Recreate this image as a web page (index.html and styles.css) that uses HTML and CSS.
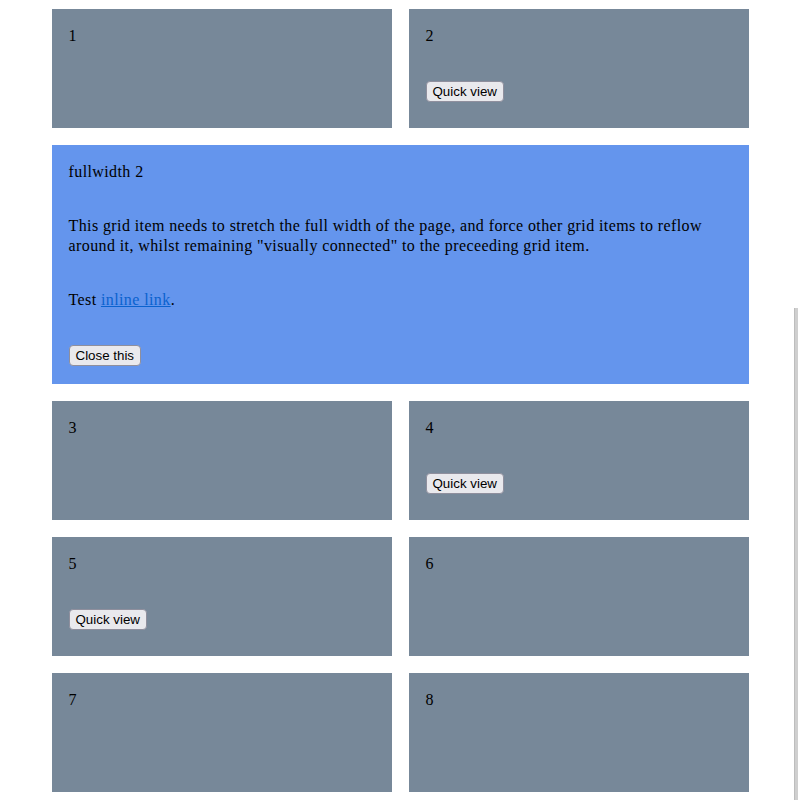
FILE: index.html
```html
<!DOCTYPE html>
<html lang="en">
<head>
    <meta charset="UTF-8">
    <title>Grid fullwidth item</title>
    <link rel="stylesheet" href="styles.css">
</head>
<body>
<div class="grid">
    <div class="grid-item">
        <p>1</p>
    </div>
    <div class="grid-item">
        <p>2</p>
        <button class="btn">Quick view</button>
    </div>

    <!-- expanded item, spans both columns -->
    <div class="grid-item fullwidth">
        <p>fullwidth 2</p>
        <p>This grid item needs to stretch the full width of the page, and force other grid items to reflow around it, whilst remaining "visually connected" to the preceeding grid item.</p>
        <p>Test <a href="#">inline link</a>.</p>
        <button class="btn">Close this</button>
    </div>

    <div class="grid-item">
        <p>3</p>
    </div>
    <div class="grid-item">
        <p>4</p>
        <button class="btn">Quick view</button>
    </div>
    <div class="grid-item">
        <p>5</p>
        <button class="btn">Quick view</button>
    </div>
    <div class="grid-item">
        <p>6</p>
    </div>
    <div class="grid-item">
        <p>7</p>
    </div>
    <div class="grid-item">
        <p>8</p>
    </div>
</div>

<div class="scroll-thumb"></div>
</body>
</html>
```

FILE: styles.css
```css
body {
    margin: 0;
    padding: 9px 0 8px;
    font-family: 'Liberation Serif', 'Times New Roman', serif;
    font-size: 16px;
    line-height: 20px;
    letter-spacing: 0.4px;
    color: #000;
    background: #fff;
}
.grid {
    display: grid;
    grid-template-columns: 1fr 1fr;
    gap: 17px;
    width: 697px;
    margin: 0 auto;
}
.grid-item {
    display: flex;
    flex-direction: column;
    align-items: flex-start;
    gap: 34px;
    box-sizing: border-box;
    min-height: 119px;
    padding: 17px;
    background-color: #778899;
}
.grid-item p {
    margin: 0;
}
.fullwidth {
    grid-column: 1 / -1;
    padding-bottom: 18px;
    background-color: #6495ed;
}
.fullwidth a {
    color: #0a62cf;
}
.btn {
    margin-top: 1px;
    padding: 1px 6px;
    height: 21px;
    font-family: 'Liberation Sans', Arial, sans-serif;
    font-size: 13.33px;
    line-height: 17px;
    letter-spacing: 0;
    color: #000;
    background-color: #e9e9ed;
    border: 1px solid #8f8f9d;
    border-radius: 4px;
}
.scroll-thumb {
    position: fixed;
    top: 308px;
    right: 2px;
    bottom: 0;
    width: 3px;
    background: #cfcfcf;
    border-left: 1px solid #bdbdbd;
}
```
